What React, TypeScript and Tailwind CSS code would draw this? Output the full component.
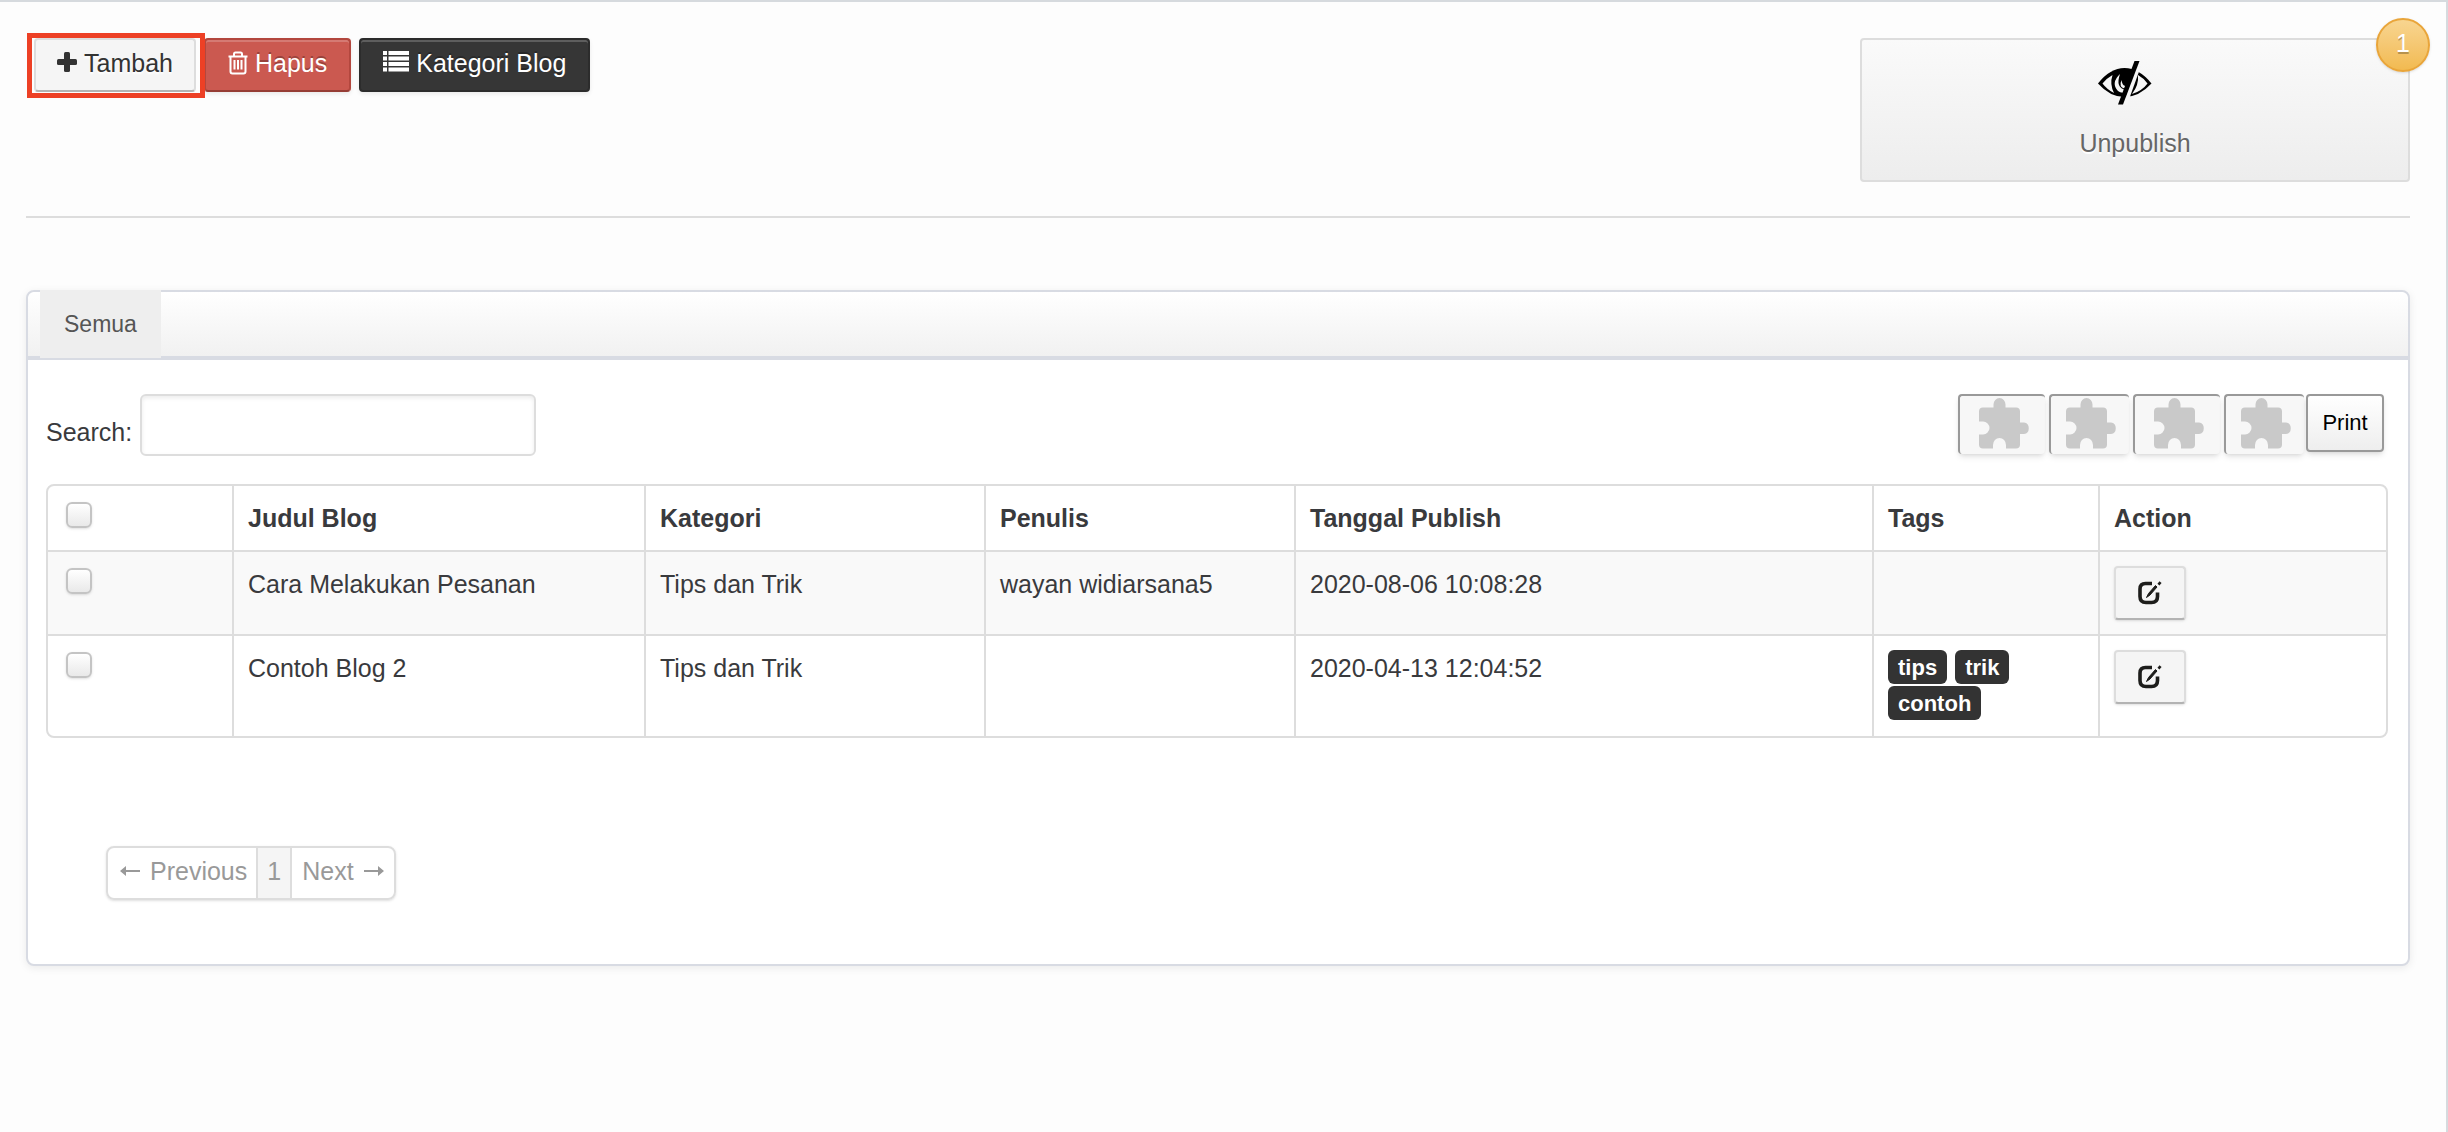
type Post = {
  title: string;
  category: string;
  author: string;
  date: string;
  tags: string[];
};

const posts: Post[] = [
  {
    title: "Cara Melakukan Pesanan",
    category: "Tips dan Trik",
    author: "wayan widiarsana5",
    date: "2020-08-06 10:08:28",
    tags: [],
  },
  {
    title: "Contoh Blog 2",
    category: "Tips dan Trik",
    author: "",
    date: "2020-04-13 12:04:52",
    tags: ["tips", "trik", "contoh"],
  },
];

const columns = ["Judul Blog", "Kategori", "Penulis", "Tanggal Publish", "Tags", "Action"];

function PlusIcon() {
  return (
    <svg width="20" height="20" viewBox="0 0 20 20" fill="currentColor">
      <rect x="0" y="7" width="20" height="6" rx="1.5" />
      <rect x="7" y="0" width="6" height="20" rx="1.5" />
    </svg>
  );
}

function TrashIcon() {
  return (
    <svg width="20" height="24" viewBox="0 0 20 24" fill="none" stroke="currentColor" strokeWidth="2">
      <path d="M0.5 5.5H19.5M6 5V3Q6 1.5 7.5 1.5H12.5Q14 1.5 14 3V5" />
      <path d="M2.5 5.5V20.5Q2.5 22.5 4.5 22.5H15.5Q17.5 22.5 17.5 20.5V5.5" />
      <path d="M6.5 9V18.5M10 9V18.5M13.5 9V18.5" />
    </svg>
  );
}

function ListIcon() {
  return (
    <svg width="26" height="21" viewBox="0 0 26 21" fill="currentColor">
      <path d="M0 0h4v4H0zM0 5.5h4v4H0zM0 11h4v4H0zM0 16.5h4v4H0z" />
      <path d="M5.5 0H26v4H5.5zM5.5 5.5H26v4H5.5zM5.5 11H26v4H5.5zM5.5 16.5H26v4H5.5z" />
    </svg>
  );
}

function EyeSlashIcon() {
  return (
    <svg width="54" height="44" viewBox="0 0 54 44">
      <path d="M0 22.5Q12 7 26.5 7Q41 7 53.5 22.5Q41 36 26.5 36Q12 36 0 22.5Z" fill="#000" />
      <path d="M4.5 22.5Q9 17 14.5 14Q11.5 23 16 32Q9 28.5 4.5 22.5Z" fill="#f6f6f6" />
      <path d="M49.5 22.5Q45.5 17 40 14Q41 24 34 33Q44 30 49.5 22.5Z" fill="#f6f6f6" />
      <path d="M22 13Q12.5 22 20 30Q23 32.5 27 31.5L28 29Q17 27 22 13Z" fill="#f6f6f6" />
      <path d="M23.5 19Q20.5 26 26.5 27.5L27.5 25Q24 24.5 23.5 19Z" fill="#f6f6f6" />
      <path d="M43 5L29 44H24.5L38 6Z" fill="#f6f6f6" />
      <path d="M36.5 0H41.5L25 43.5H20Z" fill="#000" />
    </svg>
  );
}

function EditIcon() {
  return (
    <svg width="24" height="24" viewBox="0 0 24 24" fill="none" stroke="#1d1d1b">
      <path
        d="M14 2.5H7.5Q2 2.5 2 8V15.5Q2 21.5 8 21.5H13.5Q19.5 21.5 19.5 15.5V11.5"
        strokeWidth="3.6"
      />
      <path d="M17.5 4.5L19 6L12 14L8.5 16.5L10.5 12.5Z" fill="#1d1d1b" strokeWidth="1" />
      <path d="M20.5 1.5L22.5 3.2" strokeWidth="3.2" />
    </svg>
  );
}

function PuzzleIcon() {
  return (
    <svg width="51" height="51" viewBox="0 0 51 51" fill="#c9c9c9">
      <path d="M0 13.5Q0 9.5 4 9.5H14.5V6.5A6 6.5 0 0 1 26.5 6.5V9.5H37Q41 9.5 41 13.5V24.5H45A5.5 5.8 0 0 1 45 36H41V46.5Q41 50.5 37 50.5H27V47A6 6.5 0 0 0 14 47V50.5H4Q0 50.5 0 46.5V36.5H4A6 6 0 0 0 4 23.5H0Z" />
    </svg>
  );
}

function Arrow({ right }: { right?: boolean }) {
  return (
    <svg
      width="20"
      height="12"
      viewBox="0 0 20 12"
      fill="currentColor"
      className={right ? "mt-[17px] rotate-180" : "mt-[17px]"}
    >
      <path d="M0 6L6 1V5H20V7H6V11Z" />
    </svg>
  );
}

function Checkbox({ label }: { label: string }) {
  return (
    <input
      type="checkbox"
      aria-label={label}
      className="block appearance-none ml-1 mt-0.5 size-[26px] rounded-md border-2 border-[#c4c4c4] bg-linear-to-b from-white to-[#e9e9e9] shadow-sm"
    />
  );
}

// the export buttons lost their plugin, so each one only shows the puzzle piece
function PluginButton({ label, wide }: { label: string; wide?: boolean }) {
  return (
    <button
      aria-label={label}
      className={`h-[60px] pt-0.5 rounded-sm border-t-2 border-l-2 border-[#999] bg-[#f7f7f7] shadow-md flex items-start ${
        wide ? "w-[87px] pl-[19px]" : "w-20 pl-[15px]"
      }`}
    >
      <PuzzleIcon />
    </button>
  );
}

export default function App() {
  return (
    <div className="min-h-screen bg-[#fdfdfd] border-t-2 border-r-2 border-[#d6dade] pl-[26px] pr-9 pt-9 font-['Liberation_Sans',Arial,sans-serif] text-[25px] leading-9 text-[#393a3d]">
      {/* Toolbar */}
      <div className="flex items-start justify-between border-b-2 border-[#ddd] pb-[34px]">
        <div className="flex gap-2 pl-2">
          <div className="relative z-10">
            <button className="h-[54px] px-[21px] flex items-start gap-[7px] pt-[5px] rounded border-2 border-[#ddd] border-b-[#b3b3b3] bg-[#f5f5f5] text-[#333] text-shadow-[0_2px_2px_white]">
              <span className="mt-[7px]"><PlusIcon /></span>
              Tambah
            </button>
            <span className="absolute -left-[7px] -right-[9px] -top-[5px] -bottom-1.5 border-5 border-[#ed4025] pointer-events-none" />
          </div>
          <button className="h-[54px] px-[22px] flex items-start gap-[7px] pt-[5px] rounded border-2 border-[#b3473e] border-b-[#963d35] bg-[#cb5950] text-white shadow-[0_2px_4px_rgba(0,0,0,0.08),inset_0_2px_0_rgba(255,255,255,0.2)] text-shadow-[0_-2px_0_rgba(0,0,0,0.25)]">
            <span className="mt-1.5"><TrashIcon /></span>
            Hapus
          </button>
          <button className="h-[54px] px-[22px] flex items-start gap-[7px] pt-[5px] rounded border-2 border-[#2c2c2c] bg-[#363636] text-white shadow-[0_2px_4px_rgba(0,0,0,0.08),inset_0_2px_0_rgba(255,255,255,0.2)] text-shadow-[0_-2px_0_rgba(0,0,0,0.25)]">
            <span className="mt-1.5"><ListIcon /></span>
            Kategori Blog
          </button>
        </div>

        <a
          href="#"
          className="relative w-[550px] h-36 flex flex-col items-center rounded border-2 border-[#ddd] bg-linear-to-b from-[#fafafa] to-[#ededed] text-[#666] pt-[21px] text-shadow-[0_2px_0_white]"
        >
          <span className="mr-5"><EyeSlashIcon /></span>
          <span className="mt-5">Unpublish</span>
          <span className="absolute -top-[22px] -right-[22px] size-[54px] pt-[5px] text-center rounded-full border-2 border-[#e9a53a] bg-linear-to-b from-[#f8d590] to-[#f2ba50] text-white shadow-sm text-shadow-[0_2px_0_rgba(0,0,0,0.25)]">
            1
          </span>
        </a>
      </div>

      {/* Panel */}
      <div className="mt-[72px] rounded-lg border-2 border-[#d8dbe3] bg-white shadow-[0_2px_8px_rgba(0,0,0,0.08)] pb-16">
        <div className="h-[68px] px-3 border-b-4 border-[#d8dbe3] rounded-t-lg bg-linear-to-b from-white to-[#f1f1f1]">
          <a href="#" className="inline-block h-[68px] -mt-0.5 px-6 pt-[18px] bg-[#eee] text-[23px] leading-8 text-[#555]">
            Semua
          </a>
        </div>

        <div className="pl-[18px] pr-5 pt-[34px]">
          <div className="flex justify-between">
            <div className="flex">
              <label htmlFor="search" className="pt-5 mr-2">Search:</label>
              <input
                id="search"
                type="text"
                className="w-[396px] h-[62px] px-3 rounded-md border-2 border-[#ddd] bg-white shadow-[inset_0_2px_4px_rgba(0,0,0,0.08)]"
              />
            </div>
            <div className="flex gap-1 mr-1">
              <PluginButton label="Copy" wide />
              <PluginButton label="CSV" />
              <PluginButton label="Excel" wide />
              <PluginButton label="PDF" />
              <button className="h-[58px] w-[78px] -ml-0.5 rounded-sm border-2 border-[#999] bg-linear-to-b from-white to-[#eee] text-[22px] leading-7 text-black shadow-md">
                Print
              </button>
            </div>
          </div>

          <div className="mt-7 rounded-lg border-2 border-[#ddd] overflow-hidden">
            <table className="w-full border-separate border-spacing-0 text-left [&_td]:p-3.5 [&_th]:p-3.5 [&_td]:align-top [&_th]:align-top">
              <colgroup>
                <col className="w-[184px]" />
                <col className="w-[412px]" />
                <col className="w-[340px]" />
                <col className="w-[310px]" />
                <col className="w-[578px]" />
                <col className="w-[226px]" />
                <col className="w-[288px]" />
              </colgroup>
              <thead>
                <tr>
                  <th><Checkbox label="Pilih semua" /></th>
                  {columns.map((name) => (
                    <th key={name} className="border-l-2 border-[#ddd]">{name}</th>
                  ))}
                </tr>
              </thead>
              <tbody className="[&_td]:border-t-2 [&_td]:border-[#ddd] [&_td+td]:border-l-2">
                {posts.map((post) => (
                  <tr key={post.title} className="odd:bg-[#f9f9f9]">
                    <td><Checkbox label={post.title} /></td>
                    <td>{post.title}</td>
                    <td>{post.category}</td>
                    <td>{post.author}</td>
                    <td>{post.date}</td>
                    <td>
                      <div className="flex flex-wrap gap-x-2 gap-y-0.5 pb-0.5">
                        {post.tags.map((tag) => (
                          <span key={tag} className="h-[34px] px-2.5 rounded-md bg-[#333] text-white text-[22px] leading-9 font-bold">
                            {tag}
                          </span>
                        ))}
                      </div>
                    </td>
                    <td>
                      <button
                        aria-label="Edit"
                        className="w-[72px] h-[54px] flex items-center justify-center rounded border-2 border-[#ddd] border-b-[#b3b3b3] bg-[#f5f5f5] shadow-sm"
                      >
                        <EditIcon />
                      </button>
                    </td>
                  </tr>
                ))}
              </tbody>
            </table>
          </div>

          {/* Pagination */}
          <nav className="mt-[108px] ml-[60px] w-fit flex rounded-lg border-2 border-[#ddd] shadow-sm text-[#999] leading-[46px] h-[54px] overflow-hidden">
            <a href="#" className="pl-3 pr-[9px] flex gap-2.5">
              <Arrow />
              Previous
            </a>
            <a href="#" className="w-9 text-center border-x-2 border-[#ddd] bg-[#f5f5f5]">1</a>
            <a href="#" className="px-2.5 flex gap-2.5">
              Next
              <Arrow right />
            </a>
          </nav>
        </div>
      </div>
    </div>
  );
}
